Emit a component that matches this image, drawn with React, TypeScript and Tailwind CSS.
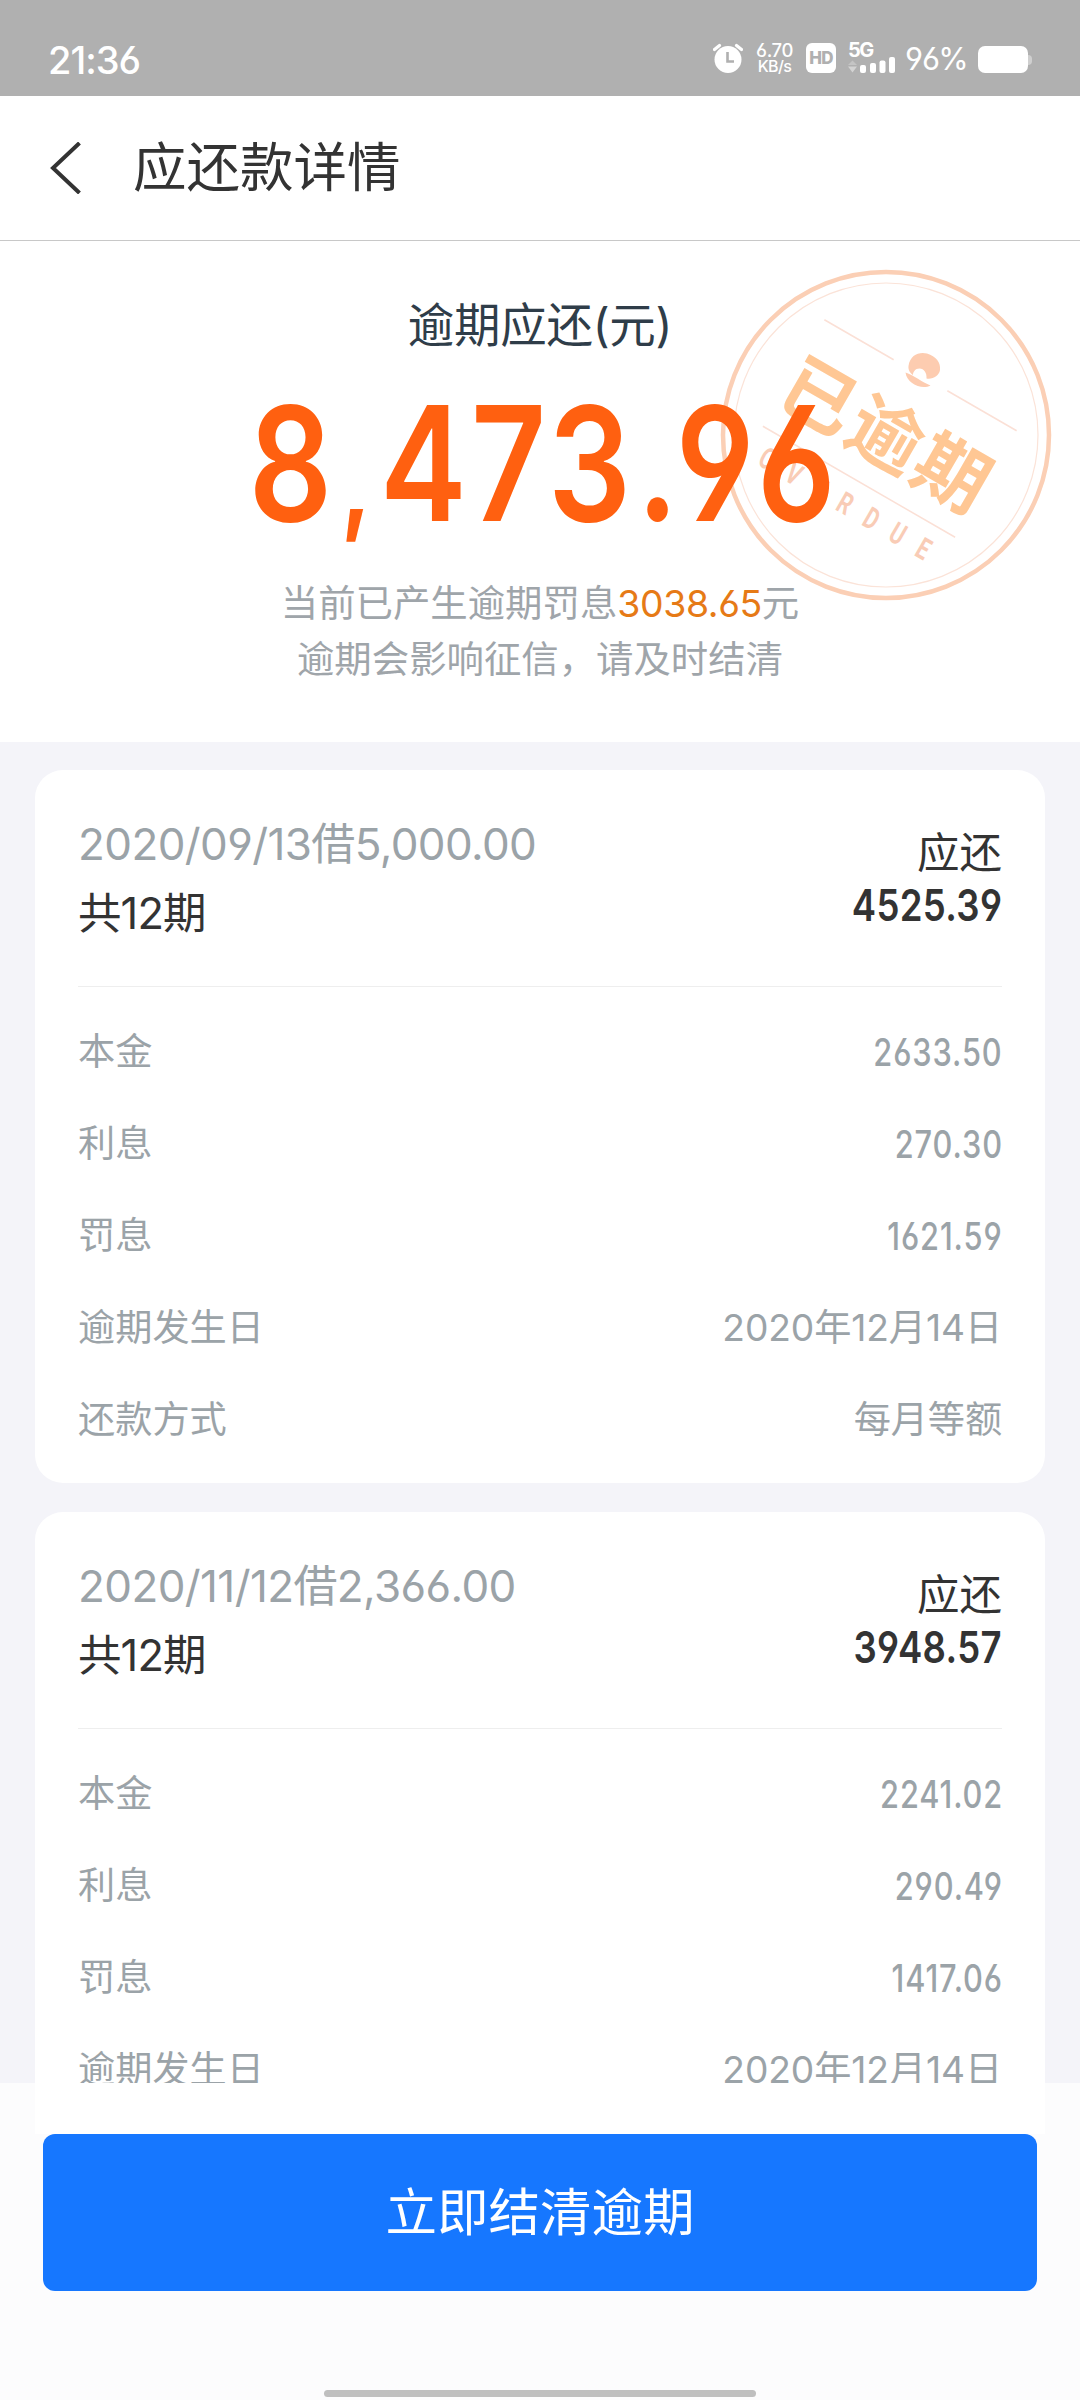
import clsx from 'clsx';

type Row = { label: string; value: string; plain?: boolean };

type Loan = {
  title: string;
  periods: string;
  due: string;
  rows: Row[];
};

const loans: Loan[] = [
  {
    title: '2020/09/13借5,000.00',
    periods: '共12期',
    due: '4525.39',
    rows: [
      { label: '本金', value: '2633.50' },
      { label: '利息', value: '270.30' },
      { label: '罚息', value: '1621.59' },
      { label: '逾期发生日', value: '2020年12月14日', plain: true },
      { label: '还款方式', value: '每月等额', plain: true },
    ],
  },
  {
    title: '2020/11/12借2,366.00',
    periods: '共12期',
    due: '3948.57',
    rows: [
      { label: '本金', value: '2241.02' },
      { label: '利息', value: '290.49' },
      { label: '罚息', value: '1417.06' },
      { label: '逾期发生日', value: '2020年12月14日', plain: true },
    ],
  },
];

function StatusBar() {
  return (
    <div className="flex h-24 shrink-0 items-start bg-[#b0b0b0] pl-12 pr-12 text-white">
      <div className="mt-10 text-[38px] font-medium leading-10 tracking-[-1px]">21:36</div>

      <div className="ml-auto mt-[43px] flex h-[30px] items-center">
        {/* Alarm */}
        <svg className="h-[30px] w-[30px]" viewBox="0 0 30 30" fill="none">
          <circle cx="15" cy="16.5" r="13.5" fill="#fff" />
          <path d="M1.500 6.500 6.500 2.500M28.500 6.500 23.500 2.500" stroke="#fff" strokeWidth="3.200" strokeLinecap="round" />
          <path d="M14.500 9v9.500h6.500" stroke="#b0b0b0" strokeWidth="2.600" />
        </svg>

        {/* Network speed */}
        <div className="ml-[13px] w-[37px] whitespace-nowrap text-center font-medium">
          <div className="text-[18.5px] leading-4 tracking-[-0.4px]">6.70</div>
          <div className="text-[16px] leading-4 tracking-[-0.6px]">KB/s</div>
        </div>

        <div className="ml-[13px] flex h-[30px] w-[30px] items-center justify-center rounded-md bg-white text-[17px] font-extrabold leading-none tracking-[-0.8px] text-[#b0b0b0]">
          HD
        </div>

        {/* Signal */}
        <div className="ml-3 h-[30px] w-[48px]">
          <div className="h-[15px] text-[20px] font-bold leading-[15px] tracking-[-1.5px]">5G</div>
          <svg className="-mt-px h-[17px] w-[48px]" viewBox="0 0 48 17" fill="#fff">
            <path d="M4.500 3.500 9 8H0Z" opacity="0.250" />
            <path d="M4.500 15.500 9 9.500H0Z" opacity="0.450" />
            <rect x="12" y="8" width="6" height="8" rx="2" />
            <rect x="22" y="6" width="6" height="10" rx="2" />
            <rect x="31.500" y="3.500" width="6" height="12.500" rx="2" />
            <rect x="41" y="0" width="6" height="16" rx="2" />
          </svg>
        </div>

        <div className="ml-[9px] w-[65px] whitespace-nowrap pt-0.5 text-[31px] leading-[30px] tracking-[-0.6px]">96%</div>

        {/* Battery */}
        <div className="ml-[8px] flex items-center pt-[3px]">
          <div className="h-[27px] w-[50px] rounded-[7px] border border-white/70 bg-white" />
          <div className="h-2.5 w-1 rounded-r-full bg-white/40" />
        </div>
      </div>
    </div>
  );
}

function Header() {
  return (
    <div className="flex h-[145px] shrink-0 items-center border-b border-[#c8c8c8] bg-white pl-12">
      <svg className="h-[52px] w-9" viewBox="0 0 36 52" fill="none">
        <path d="M31.500 1 5 26l26.500 25" stroke="#333" strokeWidth="4" />
      </svg>
      <h1 className="ml-[49px] text-[53.5px] leading-none text-[#333]">应还款详情</h1>
    </div>
  );
}

function OverdueStamp() {
  return (
    <svg className="absolute left-[720px] top-[28px] h-[332px] w-[332px]" viewBox="-166 -166 332 332" fill="none">
      <circle r="163" stroke="#fbcfb5" strokeWidth="4.500" />
      <circle r="152" stroke="#fbe3d8" strokeWidth="1.200" />
      <g transform="rotate(30)">
        <path d="M-111-69h80M31-69h80M-111 54h222" stroke="#fbe0d6" strokeWidth="1.500" />
        <text x="1" y="27" textAnchor="middle" fontSize="74" fontWeight="700" letterSpacing="2.500" fill="#ffc794">
          已逾期
        </text>
        <text
          transform="translate(-98 90) scale(0.7 1)"
          fontFamily="Roboto"
          fontSize="30"
          fontWeight="700"
          letterSpacing="24"
          fill="#f9ccb6"
        >
          OVERDUE
        </text>
      </g>
      {/* Shell */}
      <g fill="#fdccb0">
        <path d="M22.500-69C24-80 33-83.500 41-81.500 50-79 55-72 54-65 53-59 47-55.500 40.500-56.500 41-62 38-66.500 33.500-66.500 29-66.500 27-63 27-60 24-62 22-65 22.500-69Z" />
        <path d="M19.500-62.500C28-59.500 36-53 44.500-49.500 36-45 21-51 19.500-62.500Z" />
      </g>
    </svg>
  );
}

function Summary() {
  return (
    <section className="relative flex h-[501px] shrink-0 flex-col items-center bg-white">
      <OverdueStamp />
      <div className="relative mt-[56px] text-[46.5px] leading-[56px] tracking-[-0.3px] text-[#2f3d49]">逾期应还(元)</div>
      <div className="relative mt-[38px] flex h-[144px] w-[580px] items-center justify-center pl-2">
        <div className="shrink-0 scale-x-[0.82] whitespace-nowrap text-[159px] font-semibold leading-none tracking-[5px] text-[#ff6010]">
          8<span className="px-1.5 text-[108px] font-bold">,</span>473<span className="pl-0.5">.</span>96
        </div>
      </div>
      <div className="relative mt-[41px] text-center text-[37.4px] leading-[56px] text-[#9fa5aa]">
        <p>
          当前已产生逾期罚息<span className="tracking-[-0.4px] text-[#e67a16]">3038.65</span>元
        </p>
        <p>逾期会影响征信，请及时结清</p>
      </div>
    </section>
  );
}

function LoanCard({ loan }: { loan: Loan }) {
  return (
    <div className="h-[713px] shrink-0 rounded-[28px] bg-white px-[43px]">
      <div className="flex h-[217px] justify-between border-b border-[#eeeeee]">
        <div className="pt-10">
          <div className="text-[44px] leading-[68px] tracking-[-0.6px] text-[#9ba3a8]">{loan.title}</div>
          <div className="text-[43.5px] leading-[70px] tracking-[-0.9px] text-[#333]">{loan.periods}</div>
        </div>
        <div className="flex flex-col items-end pt-[57px] text-[#333]">
          <div className="text-[42.5px] leading-[52px]">应还</div>
          <div className="origin-right scale-x-[0.83] text-[44px] font-semibold leading-[52px] tracking-[0.4px]">
            {loan.due}
          </div>
        </div>
      </div>
      <div className="pt-[19px]">
        {loan.rows.map((row) => (
          <div key={row.label} className="flex h-[92px] items-center justify-between text-[37.2px] text-[#9ba3a8]">
            <span>{row.label}</span>
            <span
              className={clsx(
                row.plain
                  ? 'tracking-[-0.1px]'
                  : '-mr-px origin-right scale-x-[0.82] pt-0.5 text-[37.5px] font-medium tracking-[1.1px]'
              )}
            >
              {row.value}
            </span>
          </div>
        ))}
      </div>
    </div>
  );
}

export default function App() {
  return (
    <div className="flex h-[2400px] w-[1080px] flex-col overflow-hidden bg-[#f4f4f9] font-['Inter','Noto_Sans_CJK_SC',sans-serif] [font-feature-settings:'cv03','cv04']">
      <StatusBar />
      <Header />
      <Summary />

      <main className="flex h-[1341px] shrink-0 flex-col gap-[29px] overflow-hidden px-[35px] pt-7">
        {loans.map((loan) => (
          <LoanCard key={loan.title} loan={loan} />
        ))}
      </main>

      <footer className="flex grow flex-col items-center bg-[#fcfcfd]">
        <div className="h-[51px] w-[1010px] bg-white" />
        <button className="h-[157px] w-[994px] rounded-xl bg-[#1677ff] text-[51.5px] text-white">立即结清逾期</button>
        <div className="mb-[3px] mt-auto h-[7px] w-[432px] rounded-full bg-[#bfbfbf]" />
      </footer>
    </div>
  );
}
